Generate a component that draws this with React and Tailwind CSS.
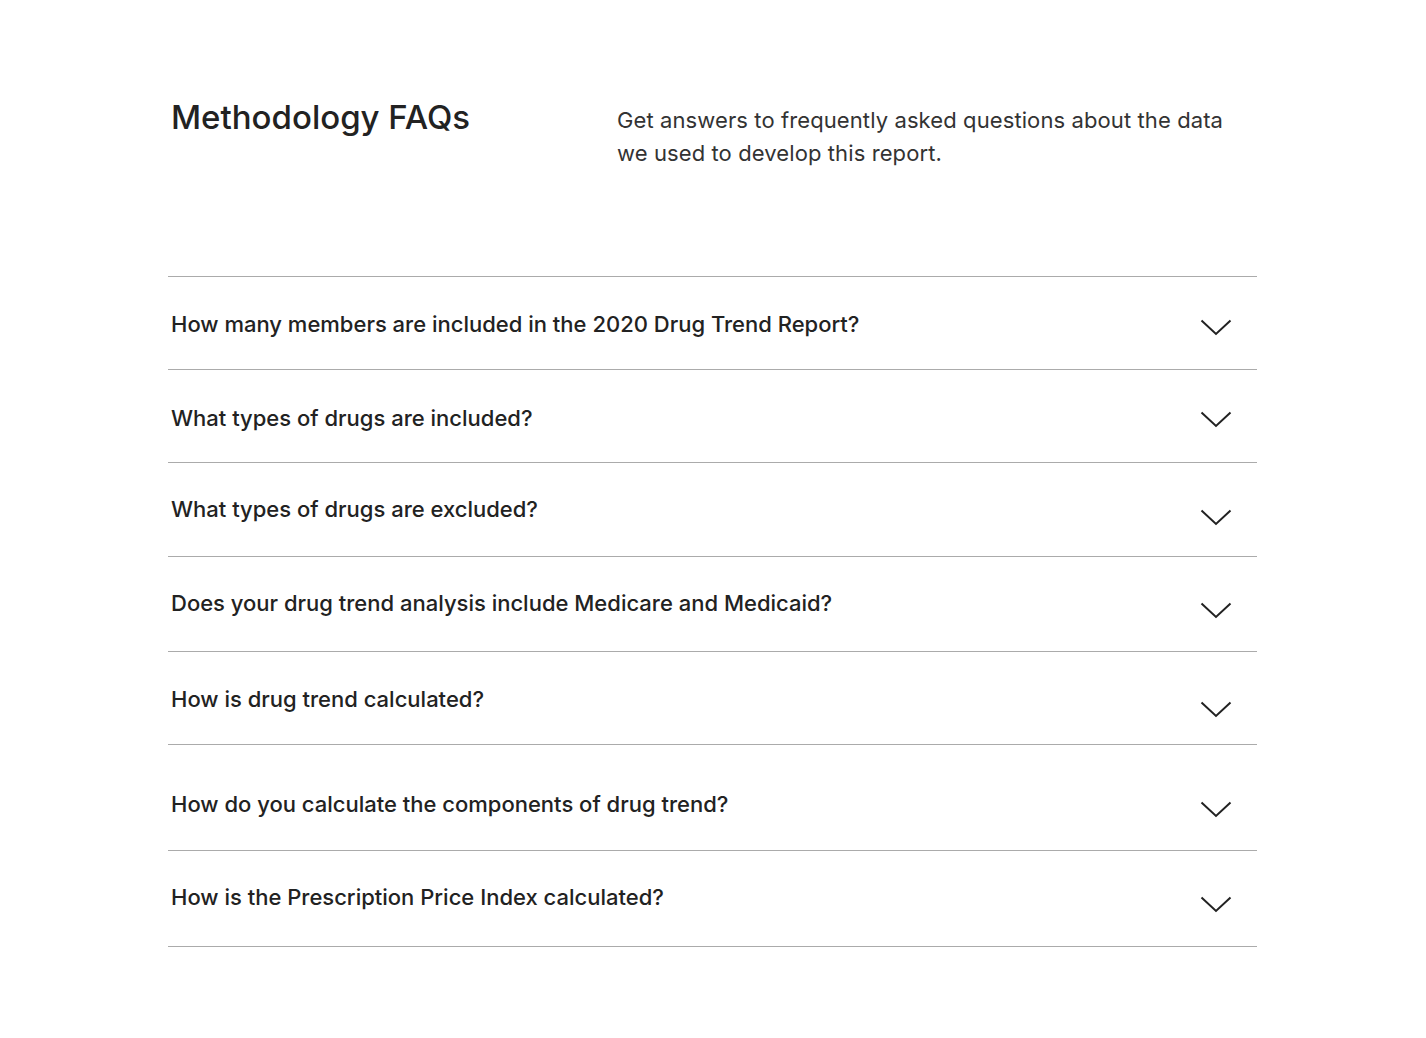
import React from "react";

const rows = [
  { q: "How many members are included in the 2020 Drug Trend Report?", h: "h-[93px]", pt: "pt-[33px]", mt: "mt-[42px]" },
  { q: "What types of drugs are included?", h: "h-[93px]", pt: "pt-[34px]", mt: "mt-[41px]" },
  { q: "What types of drugs are excluded?", h: "h-[94px]", pt: "pt-[32px]", mt: "mt-[46px]" },
  { q: "Does your drug trend analysis include Medicare and Medicaid?", h: "h-[95px]", pt: "pt-[32px]", mt: "mt-[45px]" },
  { q: "How is drug trend calculated?", h: "h-[93px]", pt: "pt-[33px]", mt: "mt-[49px]" },
  { q: "How do you calculate the components of drug trend?", h: "h-[106px]", pt: "pt-[45px]", mt: "mt-[56px]" },
  { q: "How is the Prescription Price Index calculated?", h: "h-[96px]", pt: "pt-[32px]", mt: "mt-[45px]" },
];

function Chevron() {
  return (
    <svg width="32" height="17" viewBox="0 0 32 17" fill="none">
      <path d="M1.5 1.5 L16 15 L30.5 1.5" stroke="#222" strokeWidth="2" />
    </svg>
  );
}

export default function App() {
  return (
    <div className="min-h-screen bg-white text-[#222]" style={{ fontFamily: "Inter, 'Liberation Sans', sans-serif" }}>
      <div className="w-[1089px] ml-[168px] pt-[95px]">
        <div className="flex">
          <h1 className="w-[449px] pl-[3px] text-[33px] leading-[44px] font-medium">Methodology FAQs</h1>
          <p className="pt-[9px] w-[630px] text-[22px] leading-[33px] text-[#333] tracking-[0.1px]">
            Get answers to frequently asked questions about the data we used to develop this report.
          </p>
        </div>
        <div className="mt-[106px] border-b border-[#ababab]">
          {rows.map((r, i) => (
            <div key={i} className={`flex justify-between border-t border-[#ababab] ${r.h}`}>
              <div className={`pl-[3px] ${r.pt} text-[22px] leading-[28px] font-medium`}>{r.q}</div>
              <div className={`mr-[25px] ${r.mt}`}>
                <Chevron />
              </div>
            </div>
          ))}
        </div>
      </div>
    </div>
  );
}
